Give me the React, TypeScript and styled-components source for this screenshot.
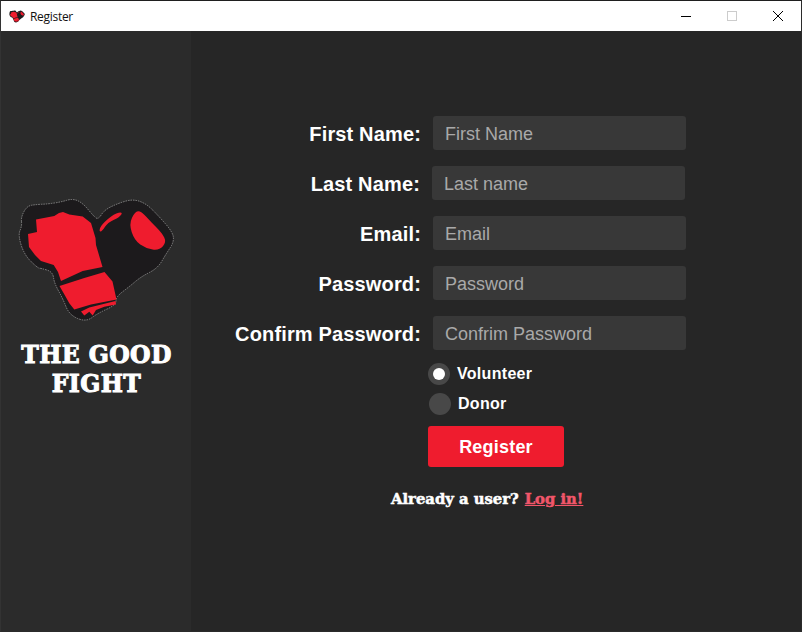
import React from "react";
import styled, { createGlobalStyle } from "styled-components";

const Global = createGlobalStyle`
  html, body { margin: 0; padding: 0; background: #262626; }
  * { box-sizing: border-box; }
`;

const Win = styled.div`
  width: 802px;
  height: 632px;
  display: flex;
  flex-direction: column;
  overflow: hidden;
  background: #262626;
  border: 1px solid #2b2b2b;
  border-top-color: #1f1f1f;
  border-left-color: #333;
  font-family: "Liberation Sans", Arial, sans-serif;
`;

const TitleBar = styled.header`
  height: 30px;
  flex: none;
  display: flex;
  align-items: center;
  background: #fff;
  padding-left: 8px;
`;

const TitleText = styled.span`
  margin-left: 5px;
  font: 12px "Open Sans", "Noto Sans", sans-serif;
  color: #111;
  letter-spacing: -0.3px;
`;

const Controls = styled.div`
  margin-left: auto;
  display: flex;
  height: 100%;
`;

const Ctl = styled.div`
  width: 46px;
  height: 100%;
  display: flex;
  align-items: center;
  justify-content: center;
`;

const Body = styled.div`
  flex: 1;
  display: flex;
  min-height: 0;
`;

const Side = styled.aside`
  width: 190px;
  flex: none;
  background: #2b2b2b;
  padding-top: 164px;
  display: flex;
  flex-direction: column;
  align-items: center;
`;

const Brand = styled.h1`
  margin: 16px 0 0;
  width: 190px;
  padding-left: 1px;
  text-align: center;
  color: #fff;
  font: 900 23.5px/29px "DejaVu Serif", serif;
  letter-spacing: 0.4px;
  -webkit-text-stroke: 1px #fff;
`;

const Main = styled.main`
  flex: 1;
  padding-top: 85px;
  display: flex;
  flex-direction: column;
`;

const Row = styled.div<{ $nudge?: number }>`
  display: flex;
  align-items: center;
  height: 34px;
  margin-bottom: 16px;
  margin-left: ${(p) => p.$nudge ?? 0}px;
`;

const Label = styled.label`
  width: 230px;
  padding-top: 2px;
  text-align: right;
  color: #fff;
  font-weight: 700;
  font-size: 20px;
  letter-spacing: 0.15px;
  white-space: nowrap;
`;

const Field = styled.input`
  width: 253px;
  height: 34px;
  margin-left: 12px;
  padding: 2px 12px 0;
  border: 0;
  border-radius: 3px;
  background: #383838;
  color: #eee;
  font: 18px "Liberation Sans", Arial, sans-serif;
  &::placeholder { color: #a9a9a9; opacity: 1; }
`;

const Options = styled.div`
  margin-top: -3px;
  margin-left: 237px;
  display: flex;
  flex-direction: column;
`;

const RadioRow = styled.div<{ $nudge?: number }>`
  display: flex;
  align-items: center;
  height: 22px;
  margin-bottom: 8px;
  margin-left: ${(p) => p.$nudge ?? 0}px;
`;

const Radio = styled.span<{ $on?: boolean }>`
  width: 22px;
  height: 22px;
  border-radius: 50%;
  background: #484848;
  display: flex;
  align-items: center;
  justify-content: center;
  &::after {
    content: "";
    width: 12px;
    height: 12px;
    border-radius: 50%;
    background: ${(p) => (p.$on ? "#fff" : "transparent")};
  }
`;

const RadioLabel = styled.span`
  margin-left: 7px;
  color: #fff;
  font-weight: 700;
  font-size: 16px;
  letter-spacing: 0.3px;
`;

const Submit = styled.button`
  display: block;
  width: 136px;
  height: 41px;
  margin: 3px 0 0 237px;
  padding: 2px 0 0;
  border: 0;
  border-radius: 3px;
  background: #ef1c2e;
  color: #fff;
  font: 700 18px "Liberation Sans", Arial, sans-serif;
  letter-spacing: 0.2px;
`;

const Foot = styled.p`
  margin: 23px 0 0 200px;
  display: flex;
  color: #fff;
  font: 900 14.8px/18px "DejaVu Serif", serif;
  -webkit-text-stroke: 0.5px currentColor;
`;

const LogIn = styled.a`
  margin-left: 6px;
  color: #f2566a;
  text-decoration: underline;
`;

const GLOVE_RED = "#ef1c2e";
const GLOVE_DARK = "#1c1a1c";

type Pt = [number, number];

const smooth = (pts: Pt[]) => {
  const mid = (a: Pt, b: Pt): Pt => [(a[0] + b[0]) / 2, (a[1] + b[1]) / 2];
  const start = mid(pts[pts.length - 1], pts[0]);
  let d = `M${start[0]} ${start[1]}`;
  pts.forEach((p, i) => {
    const m = mid(p, pts[(i + 1) % pts.length]);
    d += ` Q${p[0]} ${p[1]} ${m[0]} ${m[1]}`;
  });
  return d + " Z";
};

const poly = (pts: Pt[]) => "M" + pts.map((p) => p.join(" ")).join(" L") + " Z";

const OUTLINE: Pt[] = [
  [20, 217], [26, 206], [35, 204.5], [46.7, 204], [60, 202], [71.7, 198.5], [81.7, 203], [91.7, 215], [97, 220],
  [103.3, 210], [116.7, 203.5], [131.7, 199], [145, 203.5], [156.7, 215], [171.7, 232], [173, 242], [165, 254],
  [156.7, 268.3], [140, 276.7], [128.3, 286.7], [115, 296.7], [115, 305], [96.7, 313.3], [85, 322], [68.3, 315],
  [61.7, 298.3], [53.3, 283.3], [51.7, 271.7], [40, 268.3], [36.7, 268], [23.3, 255], [17, 235], [21, 226],
];
const FIST: Pt[] = [
  [35, 219.5], [53.3, 216], [58, 213], [62, 212], [68.3, 214.5], [81.7, 216.5], [90, 223], [94.5, 238], [95, 245], [101.5, 267],
  [81.7, 271], [60, 281], [57, 272], [52.7, 265], [40, 261], [34, 255], [28, 247], [27, 234], [36, 232],
];
const CUFF: Pt[] = [
  [58.5, 286], [83.3, 278], [103.5, 272], [111.5, 281.5], [115.5, 299.5], [90, 304.5], [73.3, 309.5], [68.3, 303.3], [62.7, 293.3],
];
const FRINGE: Pt[] = [
  [114.5, 301], [115, 304.5], [103.3, 306.7], [95, 310], [91.7, 315.5], [88.3, 311.7], [83.3, 315.5], [80, 311.5], [88.3, 307.5],
];
const PATCH: Pt[] = [
  [128, 224], [134, 211.5], [140, 211], [150, 222], [161, 233], [165.5, 242], [158.3, 250.5], [145, 248.5], [133.5, 240.5],
];
const THUMB: Pt[] = [
  [98, 231.5], [100, 225], [113.3, 213.5], [122, 212], [118.3, 217.5], [106.7, 222.7], [101, 231.5],
];

function Heart({ size, outline }: { size: number; outline?: boolean }) {
  return (
    <svg width={size} height={(size * 130) / 160} viewBox="15 195 160 130" style={{ display: "block" }}>
      <path
        d={smooth(OUTLINE)}
        fill={GLOVE_DARK}
        stroke={outline ? "#9a9a9a" : "none"}
        strokeWidth={0.8}
        strokeDasharray="1.5 1"
      />
      <path d={poly(FIST)} fill={GLOVE_RED} />
      <path d={poly(CUFF)} fill={GLOVE_RED} />
      <path d={poly(FRINGE)} fill={GLOVE_RED} />
      <path d={smooth(PATCH)} fill={GLOVE_RED} />
      <path d={smooth(THUMB)} fill={GLOVE_RED} />
    </svg>
  );
}

const fields = [
  { label: "First Name:", ph: "First Name" },
  { label: "Last Name:", ph: "Last name", nudge: -1 },
  { label: "Email:", ph: "Email" },
  { label: "Password:", ph: "Password" },
  { label: "Confirm Password:", ph: "Confrim Password" },
];

export default function App() {
  return (
    <Win>
      <Global />
      <TitleBar>
        <Heart size={16} />
        <TitleText>Register</TitleText>
        <Controls>
          <Ctl>
            <svg width="10" height="10" viewBox="0 0 10 10"><path d="M0 5.5H10" stroke="#000" /></svg>
          </Ctl>
          <Ctl>
            <svg width="10" height="10" viewBox="0 0 10 10"><rect x=".5" y=".5" width="9" height="9" fill="none" stroke="#ccc" /></svg>
          </Ctl>
          <Ctl>
            <svg width="10" height="10" viewBox="0 0 10 10"><path d="M0 0L10 10M10 0L0 10" stroke="#000" /></svg>
          </Ctl>
        </Controls>
      </TitleBar>
      <Body>
        <Side>
          <Heart size={160} outline />
          <Brand>THE GOOD FIGHT</Brand>
        </Side>
        <Main>
          {fields.map((f) => (
            <Row key={f.label} $nudge={f.nudge}>
              <Label>{f.label}</Label>
              <Field placeholder={f.ph} />
            </Row>
          ))}
          <Options>
            <RadioRow>
              <Radio $on />
              <RadioLabel>Volunteer</RadioLabel>
            </RadioRow>
            <RadioRow $nudge={1}>
              <Radio />
              <RadioLabel>Donor</RadioLabel>
            </RadioRow>
          </Options>
          <Submit>Register</Submit>
          <Foot>
            Already a user?<LogIn>Log in!</LogIn>
          </Foot>
        </Main>
      </Body>
    </Win>
  );
}
